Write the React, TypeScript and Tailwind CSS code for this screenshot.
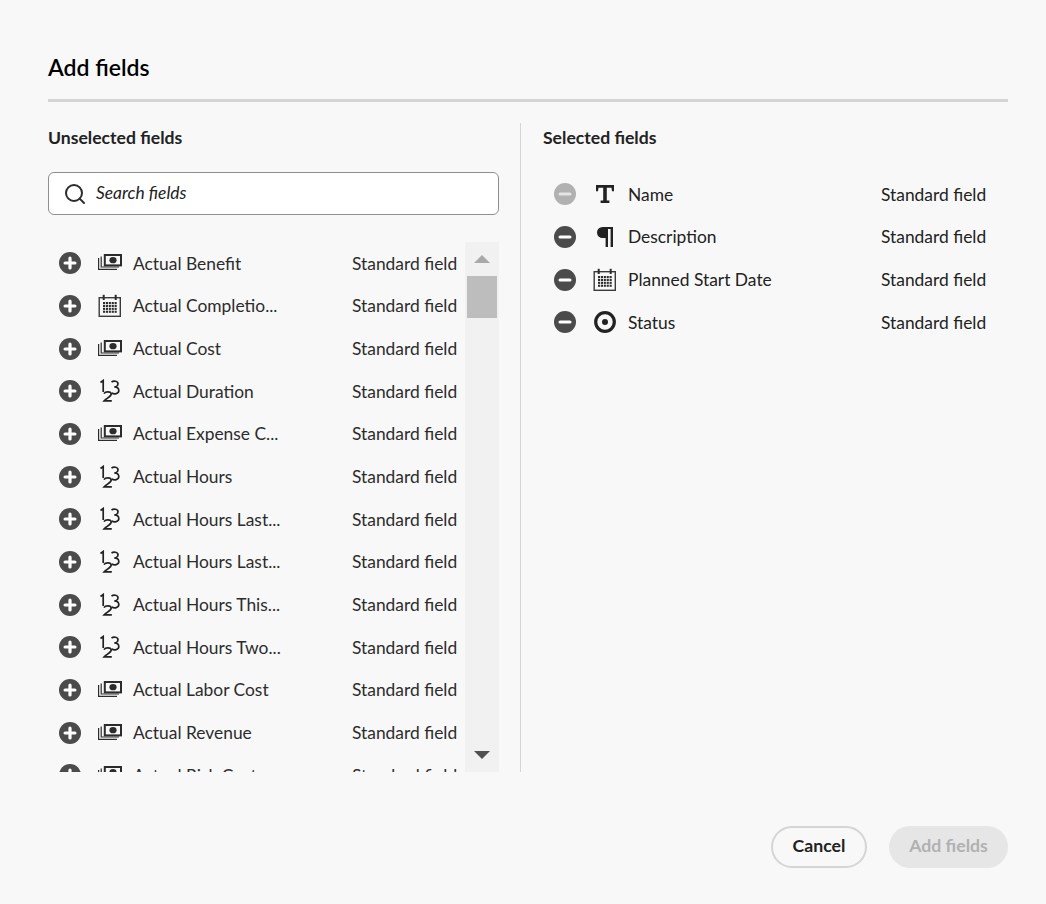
import {Search} from 'lucide-react'

type IconKind = 'money' | 'date' | 'number' | 'text' | 'para' | 'status'

const unselected: {name: string; icon: IconKind}[] = [
  {name: 'Actual Benefit', icon: 'money'},
  {name: 'Actual Completio...', icon: 'date'},
  {name: 'Actual Cost', icon: 'money'},
  {name: 'Actual Duration', icon: 'number'},
  {name: 'Actual Expense C...', icon: 'money'},
  {name: 'Actual Hours', icon: 'number'},
  {name: 'Actual Hours Last...', icon: 'number'},
  {name: 'Actual Hours Last...', icon: 'number'},
  {name: 'Actual Hours This...', icon: 'number'},
  {name: 'Actual Hours Two...', icon: 'number'},
  {name: 'Actual Labor Cost', icon: 'money'},
  {name: 'Actual Revenue', icon: 'money'},
  {name: 'Actual Risk Cost', icon: 'money'},
]

const selected: {name: string; icon: IconKind; locked?: boolean}[] = [
  {name: 'Name', icon: 'text', locked: true},
  {name: 'Description', icon: 'para'},
  {name: 'Planned Start Date', icon: 'date'},
  {name: 'Status', icon: 'status'},
]

const RoundButton = ({minus, locked}: {minus?: boolean; locked?: boolean}) => (
  <svg viewBox="0 0 22 22" className="h-[22px] w-[22px] shrink-0">
    <circle cx="11" cy="11" r="11" fill={locked ? '#b1b1b1' : '#4b4b4b'} />
    <rect x="4.5" y="9.4" width="13" height="3.2" rx="1.6" fill={locked ? '#e4e4e4' : '#fff'} />
    {!minus && <rect x="9.4" y="4.5" width="3.2" height="13" rx="1.6" fill="#fff" />}
  </svg>
)

const FieldIcon = ({kind}: {kind: IconKind}) => {
  if (kind === 'money') {
    return (
      <svg viewBox="0 0 24 16" className="h-4 w-6 shrink-0 -translate-y-[1px]" fill="none" stroke="#2c2c2c">
        <path d="M.6 4V15.4H19" strokeWidth="1.2" />
        <path d="M3.2 2.5V13H21" strokeWidth="1.2" />
        <rect x="6.8" y="1" width="16.2" height="10.4" strokeWidth="2" fill="#f8f8f8" />
        <ellipse cx="15" cy="6.2" rx="3.6" ry="3.1" fill="#2c2c2c" stroke="none" />
      </svg>
    )
  }
  if (kind === 'date') {
    const dots = [0, 1, 2, 3, 4].flatMap((c) =>
      [0, 1, 2, 3].map((r) => <rect key={`${c}-${r}`} x={5 + c * 2.9} y={8 + r * 2.9} width="2.1" height="2.1" fill="#2c2c2c" />),
    )
    return (
      <svg viewBox="0 0 24 24" className="h-6 w-6 shrink-0" fill="none">
        <rect x="1.2" y="3.7" width="21.1" height="18.6" stroke="#3a3a3a" strokeWidth="1.4" />
        <rect x="4.7" y=".8" width="2" height="5.2" fill="#2c2c2c" />
        <rect x="16.7" y=".8" width="2" height="5.2" fill="#2c2c2c" />
        {dots}
      </svg>
    )
  }
  if (kind === 'number') {
    return (
      <svg viewBox="0 0 24 24" className="h-6 w-6 shrink-0" fill="none" stroke="#222" strokeWidth="1.7">
        <path d="M2.5 3.5 5.2 1.5V13" />
        <path d="M6 14.6c1.2-2.2 7-2.4 7.2.4.2 2.2-4.4 4.2-7 6.9h7.6" />
        <path d="M13.5 3c2-1.4 6.5-1.2 6.5 1.8 0 2-2 3.2-3.8 3.2 2.4 0 4.6 1.2 4.6 3.6 0 3.4-4.6 4-7 2.4" />
      </svg>
    )
  }
  if (kind === 'text') {
    return (
      <svg viewBox="0 0 18 18" className="h-[18px] w-[18px] shrink-0" fill="#222">
        <path d="M0 0h18v6.2h-2l-.5-3.5H10.8V15.6H13.4V18H4.6V15.6H7.2V2.7H2.5L2 6.2H0Z" />
      </svg>
    )
  }
  if (kind === 'para') {
    return (
      <svg viewBox="0 0 16 20" className="h-5 w-4 shrink-0" fill="#222">
        <path d="M5.5 0H16V20H13.6V2H11V20H8.6V11H5.5A5.5 5.5 0 0 1 5.5 0Z" />
      </svg>
    )
  }
  return (
    <svg viewBox="0 0 22 22" className="h-[22px] w-[22px] shrink-0" fill="none">
      <circle cx="11" cy="11" r="9.3" stroke="#222" strokeWidth="3.2" />
      <circle cx="11" cy="11" r="3" fill="#222" />
    </svg>
  )
}

const App = () => {
  return (
    <div className="flex h-[904px] w-[1046px] flex-col overflow-hidden bg-[#f8f8f8] pr-[38px] pl-12 font-['Lato',sans-serif] text-[#222]">
      {/* header */}
      <h1 className="flex h-[99px] items-end pb-[17px] text-[23px] leading-[30px] font-semibold text-black">Add fields</h1>
      <div className="h-[3px] w-full bg-[#d5d5d5]"></div>

      <div className="mt-[21px] flex h-[649px]">
        {/* left column */}
        <div className="flex w-[451px] shrink-0 flex-col">
          <h2 className="h-[49px] pt-px text-[17.6px] leading-[28px] font-bold">Unselected fields</h2>
          <div className="flex h-[43px] items-center rounded-md border border-[#8f8f8f] bg-white pl-[14px]">
            <Search size={24} strokeWidth={2} className="shrink-0 text-[#2c2c2c]" />
            <span className="ml-[9px] text-[17.4px] text-[#222] italic">Search fields</span>
          </div>
          <div className="mt-[27px] flex min-h-0 flex-1 overflow-hidden">
            <div className="min-w-0 flex-1">
              {unselected.map((f, i) => (
                <div key={i} className="flex h-[42.67px] items-center pl-[11px] text-[17.4px] whitespace-nowrap text-[#2c2c2c]">
                  <RoundButton />
                  <div className="ml-[17px] flex w-6 justify-center">
                    <FieldIcon kind={f.icon} />
                  </div>
                  <span className="ml-[11px] w-[219px] pt-px">{f.name}</span>
                  <span className="pt-px">Standard field</span>
                </div>
              ))}
            </div>
            {/* scrollbar */}
            <div className="flex w-[34px] shrink-0 flex-col items-center bg-[#f1f1f1] pt-[13px]">
              <div className="h-0 w-0 border-x-[8px] border-b-[8px] border-x-transparent border-b-[#a9a9a9]"></div>
              <div className="mt-[13px] h-[42px] w-[30px] bg-[#bdbdbd]"></div>
              <div className="mt-auto mb-[13px] h-0 w-0 border-x-[8px] border-t-[8px] border-x-transparent border-t-[#505050]"></div>
            </div>
          </div>
        </div>

        {/* right column */}
        <div className="ml-[21px] w-px shrink-0 bg-[#d5d5d5]"></div>
        <div className="ml-[22px] flex flex-1 flex-col">
          <h2 className="h-[50px] pt-px text-[17.6px] leading-[28px] font-bold">Selected fields</h2>
          <div>
            {selected.map((f) => (
              <div key={f.name} className="flex h-[42.67px] items-center pl-[11px] text-[17.4px] whitespace-nowrap text-[#222]">
                <RoundButton minus locked={f.locked} />
                <div className="ml-[17px] flex w-6 justify-center">
                  <FieldIcon kind={f.icon} />
                </div>
                <span className="ml-[11px] w-[253px] pt-px">{f.name}</span>
                <span className="pt-px">Standard field</span>
              </div>
            ))}
          </div>
        </div>
      </div>

      {/* footer */}
      <div className="mt-[54px] flex justify-end gap-[22px]">
        <button className="flex h-[42px] w-[96px] items-center justify-center rounded-full border-2 border-[#d5d5d5] pb-[2px] text-[17.7px] font-bold text-[#222]">
          Cancel
        </button>
        <button className="flex h-[42px] w-[119px] items-center justify-center rounded-full bg-[#e6e6e6] pb-[2px] text-[17.7px] font-bold text-[#b1b1b1]">
          Add fields
        </button>
      </div>
    </div>
  )
}

export default App
